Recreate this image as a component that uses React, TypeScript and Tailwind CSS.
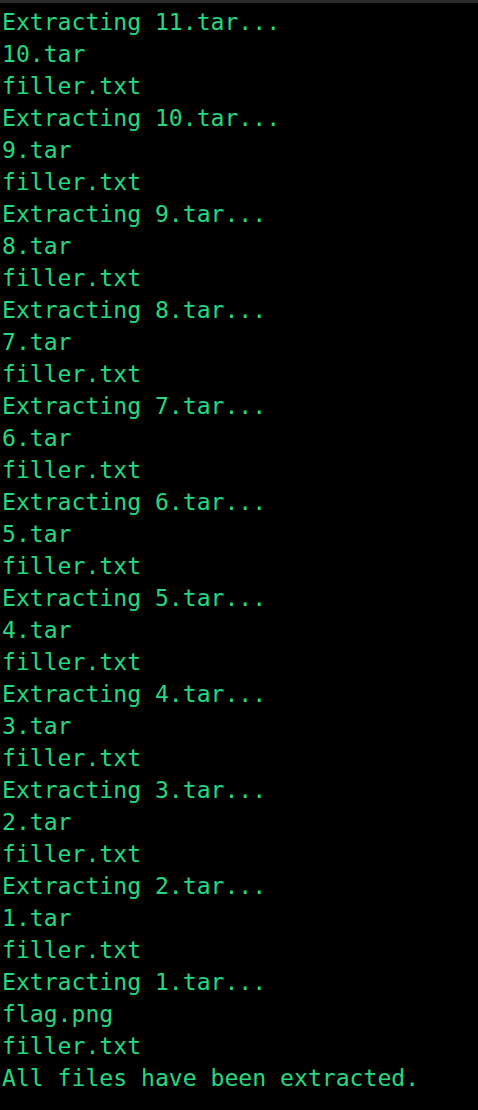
const lines: string[] = [];
for (let n = 11; n >= 1; n--) {
  lines.push(`Extracting ${n}.tar...`);
  lines.push(n === 1 ? "flag.png" : `${n - 1}.tar`);
  lines.push("filler.txt");
}
lines.push("All files have been extracted.");

export default function App() {
  return (
    <div className="min-h-[1110px] w-[478px] bg-black border-t-[3px] border-[#2b2b2b]">
      <div
        className="pt-[3px] pl-[2px] text-[23.1px] leading-[32px] text-[#26d880] whitespace-pre"
        style={{ fontFamily: '"DejaVu Sans Mono", monospace' }}
      >
        {lines.map((line, i) => (
          <div key={i}>{line}</div>
        ))}
      </div>
    </div>
  );
}
